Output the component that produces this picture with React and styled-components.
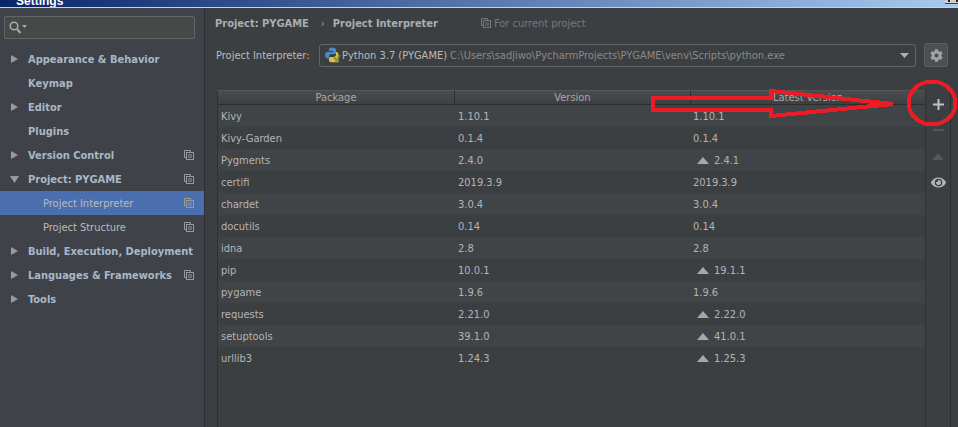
import styled, { createGlobalStyle } from "styled-components";
import { FaCog, FaEye } from "react-icons/fa";

const GlobalStyle = createGlobalStyle`
  html, body {
    margin: 0;
    padding: 0;
    background: #3c3f41;
  }
  * {
    box-sizing: border-box;
  }
`;

const Window = styled.div`
  position: relative;
  width: 958px;
  height: 427px;
  overflow: hidden;
  display: flex;
  flex-direction: column;
  font-family: "DejaVu Sans Condensed", "DejaVu Sans", sans-serif;
  font-size: 11px;
  color: #bbbbbb;
`;

const TitleBar = styled.div`
  flex: 0 0 8px;
  display: flex;
  justify-content: space-between;
  align-items: flex-end;
  overflow: hidden;
  background: linear-gradient(90deg, #0a246a, #a6caf0);
  border-bottom: 1px solid #d4d0c8;
`;

const TitleLeft = styled.div`
  display: flex;
  align-items: flex-end;
  gap: 3px;
`;

const AppIcon = styled.div`
  width: 13px;
  height: 4px;
  align-self: flex-start;
  background: #000;
  position: relative;

  &::after {
    content: "";
    position: absolute;
    left: 1px;
    top: 2px;
    width: 6px;
    height: 1px;
    background: #fff;
  }
`;

const TitleText = styled.span`
  font-family: "Liberation Sans", sans-serif;
  font-size: 12px;
  font-weight: 700;
  line-height: 12px;
  color: #fff;
`;

const CloseBox = styled.div`
  width: 13px;
  height: 4px;
  align-self: flex-start;
  background: #d4d0c8;
  border-bottom: 1px solid #404040;
  position: relative;

  &::after {
    content: "";
    position: absolute;
    left: 3px;
    top: 0;
    width: 6px;
    height: 2px;
    border-left: 2px solid #222;
    border-right: 2px solid #222;
  }
`;

const Body = styled.div`
  flex: 1;
  display: flex;
  min-height: 0;
`;

const Sidebar = styled.aside`
  flex: 0 0 205px;
  min-width: 0;
  background: #3f4249;
  border-right: 1px solid #2f3133;
  padding-top: 8px;
`;

const SearchBox = styled.div`
  height: 23px;
  margin: 0 9px 8px 4px;
  padding-left: 4px;
  display: flex;
  align-items: center;
  background: #45494a;
  border: 1px solid #646464;
  border-radius: 2px;
`;

const TreeRow = styled.div`
  height: 24px;
  display: flex;
  align-items: center;
  padding-left: ${({ $child }) => ($child ? "43px" : "28px")};
  padding-right: 10px;
  position: relative;
  font-weight: ${({ $child }) => ($child ? 400 : 700)};
  color: ${({ $child }) => ($child ? "#bbbbbb" : "#a9b7c6")};
  background: ${({ $selected }) => ($selected ? "#4b6eaf" : "transparent")};
`;

const Caret = styled.svg`
  position: absolute;
  left: 10px;
  top: 7px;
  width: 10px;
  height: 10px;
  fill: #9a9a9a;
`;

const RowLabel = styled.span`
  flex: 1;
  white-space: nowrap;
`;

const Main = styled.main`
  flex: 1;
  min-width: 0;
  padding-left: 10px;
  display: flex;
  flex-direction: column;
`;

const Breadcrumb = styled.div`
  height: 30px;
  display: flex;
  align-items: center;
  font-weight: 700;
  color: #a8adb0;
`;

const Chevron = styled.span`
  margin: 0 8px 0 12px;
  font-weight: 400;
  color: #9a9a9a;
`;

const ProjectNote = styled.span`
  display: flex;
  align-items: center;
  gap: 3px;
  margin-left: 43px;
  font-weight: 400;
  color: #787878;
`;

const InterpreterRow = styled.div`
  height: 24px;
  margin-top: 5px;
  display: flex;
  align-items: center;
`;

const FieldLabel = styled.span`
  flex: 0 0 103px;
  margin-left: 1px;
  white-space: nowrap;
  color: #bbbbbb;
`;

const Select = styled.div`
  flex: 0 0 597px;
  height: 23px;
  padding: 0 6px 0 5px;
  display: flex;
  align-items: center;
  gap: 1px;
  border: 1px solid #646464;
  border-radius: 3px;
  white-space: nowrap;
  overflow: hidden;
  color: #bbbbbb;
`;

const Path = styled.span`
  margin-left: 2px;
  color: #8a8a8a;
  flex: 1;
  overflow: hidden;
`;

const SelectArrow = styled.svg`
  width: 9px;
  height: 5px;
  fill: #b0b0b0;
  flex: none;
`;

const GearButton = styled.div`
  flex: 0 0 24px;
  height: 24px;
  margin-left: 8px;
  display: flex;
  align-items: center;
  justify-content: center;
  background: #4c5052;
  border: 1px solid #5e6060;
  border-radius: 3px;
  color: #a0a4a6;
`;

const TableArea = styled.div`
  flex: 1;
  display: flex;
  margin: 23px 0 0 2px;
  min-height: 0;
`;

const Table = styled.div`
  flex: 0 0 708px;
  align-self: stretch;
  border-left: 1px solid #2f3133;
  border-top: 1px solid #555;
`;

const Columns = styled.div`
  display: grid;
  grid-template-columns: 236px 236px 1fr;
`;

const HeaderRow = styled(Columns)`
  height: 14px;
  background: linear-gradient(#4a4d4f, #3d4042);
  border-bottom: 1px solid #2b2d2e;
`;

const HeaderCell = styled.div`
  text-align: center;
  line-height: 13px;
  color: #a8a8a8;
  border-left: ${({ $first }) => ($first ? "none" : "1px solid #2b2d2e")};
`;

const DataRow = styled(Columns)`
  height: 22px;
  align-items: center;
  background: ${({ $even }) => ($even ? "#404447" : "#3c3f41")};
  color: #b4b4b4;
`;

const Cell = styled.div`
  display: flex;
  align-items: center;
  padding-left: ${({ $pad }) => $pad}px;
  white-space: nowrap;
`;

const UpArrow = styled.svg`
  width: 12px;
  height: 7px;
  margin: 0 5px 0 4px;
  fill: #a8a8a8;
`;

const ToolColumn = styled.div`
  flex: 0 0 26px;
  padding-top: 1px;
  border-left: 1px solid #2f3133;
  border-right: 1px solid #2f3133;
  display: flex;
  flex-direction: column;
  align-items: center;
`;

const ToolSlot = styled.div`
  height: 26px;
  display: flex;
  align-items: center;
  justify-content: center;
  color: ${({ $dim }) => ($dim ? "#55585a" : "#b4b4b4")};
`;

const Annotation = styled.svg`
  position: absolute;
  inset: 0;
  width: 958px;
  height: 427px;
  pointer-events: none;
`;

const tree = [
  { label: "Appearance & Behavior", caret: "right" },
  { label: "Keymap" },
  { label: "Editor", caret: "right" },
  { label: "Plugins" },
  { label: "Version Control", caret: "right", copy: true },
  { label: "Project: PYGAME", caret: "down", copy: true },
  { label: "Project Interpreter", child: true, selected: true, copy: true },
  { label: "Project Structure", child: true, copy: true },
  { label: "Build, Execution, Deployment", caret: "right" },
  { label: "Languages & Frameworks", caret: "right", copy: true },
  { label: "Tools", caret: "right" },
];

const packages = [
  ["Kivy", "1.10.1", "1.10.1"],
  ["Kivy-Garden", "0.1.4", "0.1.4"],
  ["Pygments", "2.4.0", "2.4.1", true],
  ["certifi", "2019.3.9", "2019.3.9"],
  ["chardet", "3.0.4", "3.0.4"],
  ["docutils", "0.14", "0.14"],
  ["idna", "2.8", "2.8"],
  ["pip", "10.0.1", "19.1.1", true],
  ["pygame", "1.9.6", "1.9.6"],
  ["requests", "2.21.0", "2.22.0", true],
  ["setuptools", "39.1.0", "41.0.1", true],
  ["urllib3", "1.24.3", "1.25.3", true],
];

function CopyIcon({ color = "#9a9a9a" }) {
  return (
    <svg width="10" height="10" viewBox="0 0 10 10" fill="none" stroke={color}>
      <path d="M2.500 7.500h-2v-7h6v2" />
      <rect x="2.500" y="2.500" width="7" height="7" />
      <path d="M4 5h4M4 7h4" />
    </svg>
  );
}

function SearchIcon() {
  return (
    <svg width="18" height="13" viewBox="0 0 18 13">
      <circle cx="5" cy="5" r="3.800" fill="none" stroke="#a8a8a8" strokeWidth="1.600" />
      <path d="M8 8l3.500 4" stroke="#a8a8a8" strokeWidth="2" />
      <path d="M13 4h5l-2.500 3z" fill="#a8a8a8" />
    </svg>
  );
}

function PythonIcon() {
  return (
    <svg width="16" height="16" viewBox="0 0 16 16">
      <path d="M7 0.500C4.500 0.500 4 1.500 4 2.500V4h4v1H2.500C1 5 0 6 0 8s1 3.500 2.500 3.500H4V9.500C4 8 5 7 6.500 7h3C10.500 7 11 6.500 11 5.500v-3C11 1.200 9.500 0.500 7 0.500z" fill="#4b8bbe" />
      <path d="M11 5v2.500C11 9 10 10 8.500 10h-3C4.700 10 4 10.500 4 11.500v2c0 1 1 1.800 3.500 1.800h6V8.500C13.500 6 12.800 5 11.500 5z" fill="#e8b93a" />
      <path d="M9 10l2.500 4 3-6" fill="none" stroke="#62a03a" strokeWidth="1.800" />
    </svg>
  );
}

export default function App() {
  return (
    <Window>
      <GlobalStyle />
      <TitleBar>
        <TitleLeft>
          <AppIcon />
          <TitleText>Settings</TitleText>
        </TitleLeft>
        <CloseBox />
      </TitleBar>
      <Body>
        <Sidebar>
          <SearchBox>
            <SearchIcon />
          </SearchBox>
          {tree.map((row) => (
            <TreeRow key={row.label} $child={row.child} $selected={row.selected}>
              {row.caret && (
                <Caret viewBox="0 0 10 10">
                  {row.caret === "right" ? <path d="M1 1l7 4-7 4z" /> : <path d="M0 2h9l-4.500 7z" />}
                </Caret>
              )}
              <RowLabel>{row.label}</RowLabel>
              {row.copy && <CopyIcon />}
            </TreeRow>
          ))}
        </Sidebar>
        <Main>
          <Breadcrumb>
            Project: PYGAME
            <Chevron>›</Chevron>
            Project Interpreter
            <ProjectNote>
              <CopyIcon color="#787878" /> For current project
            </ProjectNote>
          </Breadcrumb>
          <InterpreterRow>
            <FieldLabel>Project Interpreter:</FieldLabel>
            <Select>
              <PythonIcon />
              <span>Python 3.7 (PYGAME)</span>
              <Path>C:\Users\sadjiwo\PycharmProjects\PYGAME\venv\Scripts\python.exe</Path>
              <SelectArrow viewBox="0 0 9 5">
                <path d="M0 0h9L4.500 5z" />
              </SelectArrow>
            </Select>
            <GearButton>
              <FaCog size={13} />
            </GearButton>
          </InterpreterRow>
          <TableArea>
            <Table>
              <HeaderRow>
                <HeaderCell $first>Package</HeaderCell>
                <HeaderCell>Version</HeaderCell>
                <HeaderCell>Latest version</HeaderCell>
              </HeaderRow>
              {packages.map(([name, version, latest, upgrade], i) => (
                <DataRow key={name} $even={i % 2 === 0}>
                  <Cell $pad={3}>{name}</Cell>
                  <Cell $pad={4}>{version}</Cell>
                  <Cell $pad={3}>
                    {upgrade && (
                      <UpArrow viewBox="0 0 12 7">
                        <path d="M6 0l6 7H0z" />
                      </UpArrow>
                    )}
                    {latest}
                  </Cell>
                </DataRow>
              ))}
            </Table>
            <ToolColumn>
              <ToolSlot>
                <svg width="11" height="11" viewBox="0 0 11 11" fill="#c4c4c4">
                  <path d="M4.500 0h2v4.500H11v2H6.500V11h-2V6.500H0v-2h4.500z" />
                </svg>
              </ToolSlot>
              <ToolSlot $dim>
                <svg width="11" height="2" viewBox="0 0 11 2" fill="currentColor">
                  <rect width="11" height="2" />
                </svg>
              </ToolSlot>
              <ToolSlot $dim>
                <svg width="12" height="7" viewBox="0 0 12 7" fill="currentColor">
                  <path d="M6 0l6 7H0z" />
                </svg>
              </ToolSlot>
              <ToolSlot>
                <FaEye size={15} />
              </ToolSlot>
            </ToolColumn>
          </TableArea>
        </Main>
      </Body>
      <Annotation viewBox="0 0 958 427" shapeRendering="crispEdges">
        <path
          d="M653 98H771V91L893 104 771 116V110L653 110Z"
          fill="none"
          stroke="#ed1c24"
          strokeWidth="4"
        />
        <ellipse cx="932" cy="103" rx="23.500" ry="21.500" fill="none" stroke="#ed1c24" strokeWidth="4" />
      </Annotation>
    </Window>
  );
}
